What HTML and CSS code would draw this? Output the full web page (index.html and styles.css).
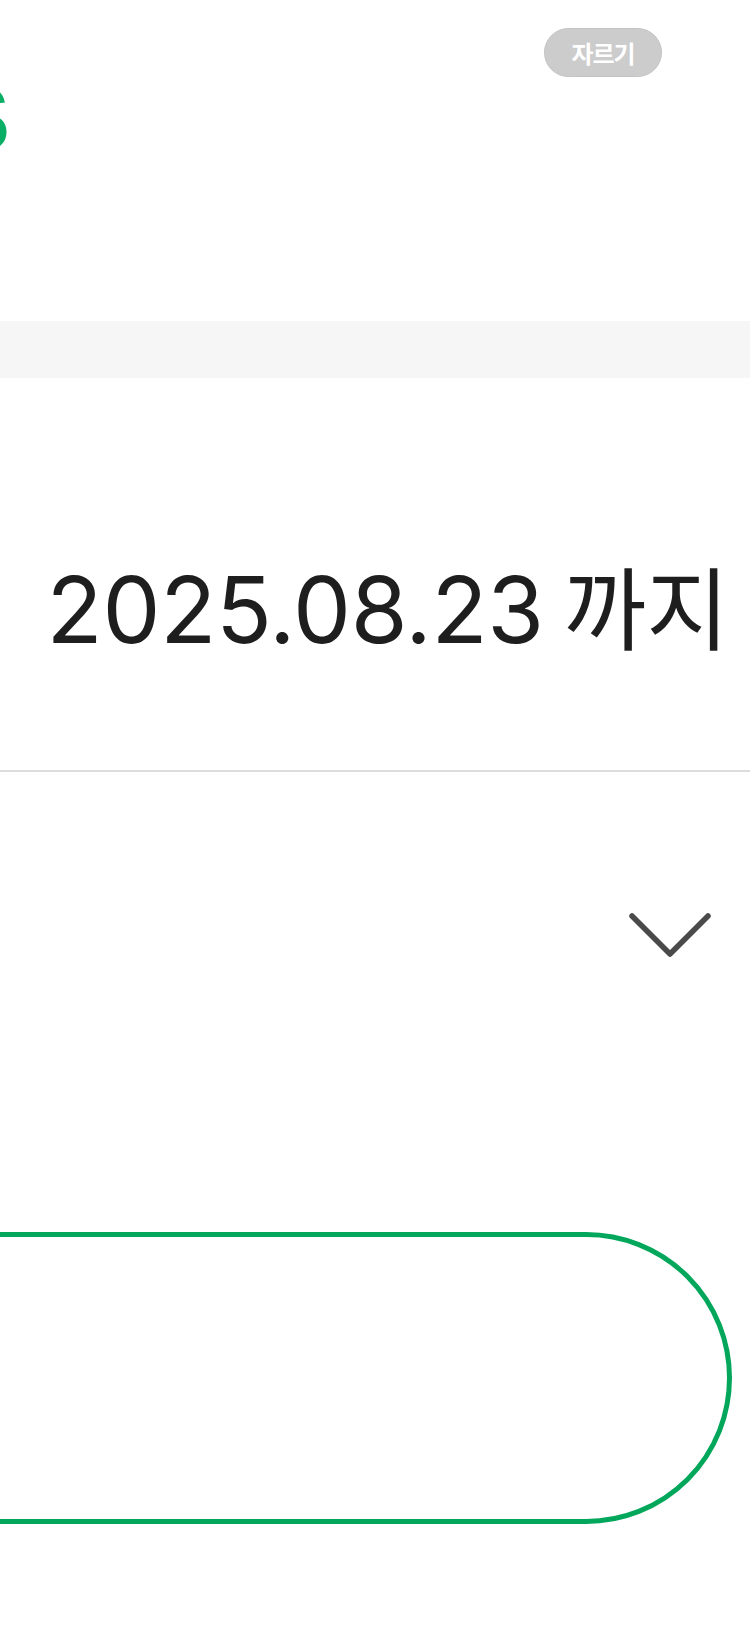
FILE: index.html
```html
<!DOCTYPE html>
<html lang="ko">
<head>
<meta charset="utf-8">
<title>만료일</title>
<link rel="stylesheet" href="styles.css">
</head>
<body>
<div class="page">
  <header class="header">
    <div class="toolbar">
      <button class="cut-btn" type="button">자르기</button>
    </div>
    <div class="logo-line"><span class="logo-glyph">S</span></div>
  </header>
  <div class="band"></div>
  <section class="date-section">
    <p class="date-text"><span class="num">2025.08.23</span> <span class="ko">까지</span></p>
  </section>
  <div class="divider"></div>
  <section class="select-row">
    <svg class="chevron" width="84" height="46" viewBox="0 0 84 46" aria-hidden="true">
      <polyline points="4,4 42,42 80,4" fill="none" stroke="#4a4a4a" stroke-width="5.5" stroke-linecap="round" stroke-linejoin="round"/>
    </svg>
  </section>
  <div class="outline-box"></div>
</div>
</body>
</html>
```

FILE: styles.css
```css
html, body {
  margin: 0;
  padding: 0;
  background: #ffffff;
}
body {
  font-family: "Liberation Sans", "Noto Sans CJK KR", sans-serif;
  overflow: hidden;
}
.page {
  width: 750px;
  height: 1626px;
  overflow: hidden;
}
.header {
  height: 321px;
  display: flex;
  flex-direction: column;
}
.toolbar {
  display: flex;
  justify-content: flex-end;
  padding-top: 28px;
  padding-right: 88px;
}
.cut-btn {
  width: 118px;
  height: 49px;
  border-radius: 25px;
  background: #cccccc;
  border: 1px solid #c3c3c3;
  color: #ffffff;
  font-family: "Noto Sans CJK KR", sans-serif;
  font-weight: 700;
  font-size: 24px;
  letter-spacing: -1px;
  line-height: 1;
  padding: 0;
  display: flex;
  align-items: center;
  justify-content: center;
}
.logo-line {
  margin-top: -8px;
  margin-left: -50px;
  height: 100px;
  line-height: 100px;
}
.logo-glyph {
  font-family: "Liberation Sans", sans-serif;
  font-weight: 700;
  font-size: 90px;
  color: #0aae65;
}
.band {
  height: 57px;
  background: #f6f6f6;
}
.date-section {
  height: 392px;
  box-sizing: border-box;
  padding-top: 176px;
  padding-right: 21px;
}
.date-text {
  margin: 0;
  text-align: right;
  font-size: 92px;
  line-height: 100px;
  height: 100px;
  color: #1e1e1e;
  white-space: nowrap;
  word-spacing: -6px;
}
.date-text .num {
  font-family: "Inter", "Liberation Sans", sans-serif;
  font-weight: 400;
  letter-spacing: -0.3px;
}
.date-text .ko {
  font-family: "Noto Sans CJK KR", sans-serif;
  font-weight: 400;
  font-size: 90px;
}
.divider {
  height: 2px;
  background: #dcdcdc;
}
.select-row {
  height: 460px;
  box-sizing: border-box;
  padding-top: 140px;
  padding-right: 38px;
  display: flex;
  justify-content: flex-end;
  align-items: flex-start;
}
.chevron {
  display: block;
}
.outline-box {
  margin-left: -200px;
  width: 932px;
  height: 292px;
  box-sizing: border-box;
  border: 5px solid #03a75c;
  border-radius: 146px;
}
```
